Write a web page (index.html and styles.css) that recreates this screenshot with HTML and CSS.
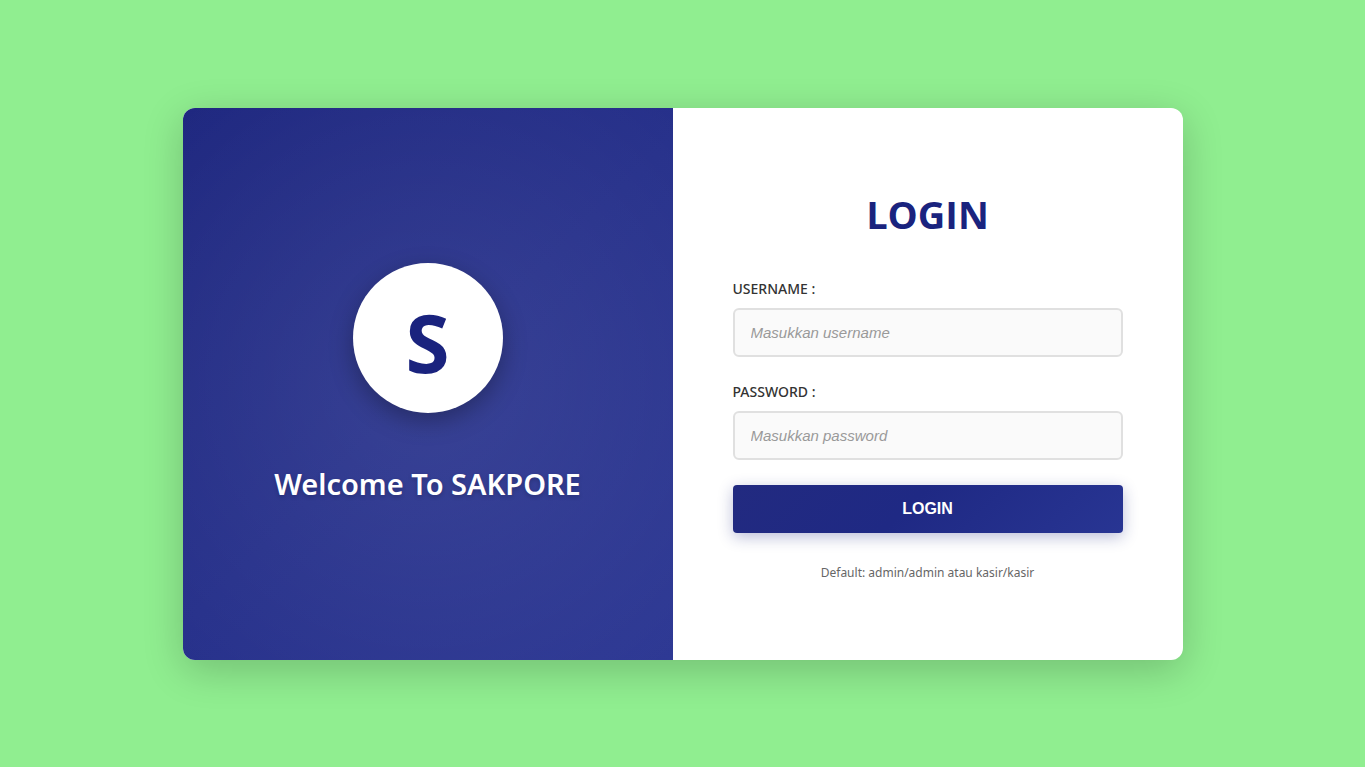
FILE: index.html
```html
<!DOCTYPE html>
<html lang="id">
<head>
<meta charset="utf-8">
<meta name="viewport" content="width=device-width, initial-scale=1">
<title>Login - SAKPORE</title>
<link rel="stylesheet" href="styles.css">
</head>
<body>
<main class="login-card">
  <section class="welcome">
    <div class="logo">S</div>
    <p class="welcome-text">Welcome To SAKPORE</p>
  </section>
  <section class="panel">
    <h1 class="title">LOGIN</h1>
    <form class="form">
      <div class="field">
        <label class="label" for="username">USERNAME :</label>
        <input class="input" id="username" name="username" type="text" placeholder="Masukkan username">
      </div>
      <div class="field">
        <label class="label" for="password">PASSWORD :</label>
        <input class="input" id="password" name="password" type="password" placeholder="Masukkan password">
      </div>
      <button class="submit" type="submit">LOGIN</button>
    </form>
    <p class="hint">Default: admin/admin atau kasir/kasir</p>
  </section>
</main>
</body>
</html>
```
FILE: styles.css
```css
* {
  box-sizing: border-box;
  margin: 0;
  padding: 0;
}

body {
  min-height: 100vh;
  display: flex;
  align-items: center;
  justify-content: center;
  padding: 20px;
  background: #90ee90;
  font-family: "Segoe UI", "Noto Sans", "Open Sans", sans-serif;
}

.login-card {
  display: flex;
  width: 100%;
  max-width: 1000px;
  border-radius: 12px;
  overflow: hidden;
  background: #fff;
  box-shadow: 0 10px 40px rgba(0, 0, 0, 0.2);
}

.welcome {
  flex: 0 0 49%;
  display: flex;
  flex-direction: column;
  align-items: center;
  justify-content: center;
  gap: 50px;
  padding: 60px 40px;
  color: #fff;
  background:
    radial-gradient(circle at center, rgba(255, 255, 255, 0.08) 0%, transparent 100%),
    linear-gradient(135deg, #1f2880 0%, #27318b 50%, #2e3994 100%);
}

.logo {
  display: flex;
  align-items: center;
  justify-content: center;
  width: 150px;
  height: 150px;
  padding-top: 8px;
  border-radius: 50%;
  background: #fff;
  color: #1a237e;
  font-size: 80px;
  font-weight: 700;
  box-shadow: 0 8px 25px rgba(0, 0, 0, 0.3);
}

.welcome-text {
  font-size: 29px;
  line-height: 42px;
  font-weight: 600;
  text-shadow: 0 2px 4px rgba(0, 0, 0, 0.2);
}

.panel {
  flex: 1;
  padding: 80px 60px 78px;
}

.title {
  margin-bottom: 39px;
  color: #1a237e;
  font-family: "Segoe UI", "Open Sans", sans-serif;
  font-size: 38px;
  line-height: 52px;
  font-weight: 700;
  text-align: center;
}

.field {
  margin-bottom: 25px;
}

.label {
  display: block;
  margin-bottom: 10px;
  color: #333;
  font-size: 14px;
  line-height: 19px;
  font-weight: 500;
}

.input {
  display: block;
  width: 100%;
  height: 49px;
  padding: 0 16px;
  border: 2px solid #e0e0e0;
  border-radius: 6px;
  background: #fafafa;
  color: #333;
  font-family: "Liberation Sans", Arial, sans-serif;
  font-size: 15px;
}

.input::placeholder {
  color: #999;
  font-style: italic;
}

.submit {
  display: block;
  width: 100%;
  height: 48px;
  border: 0;
  border-radius: 4px;
  background: linear-gradient(135deg, #222a80 0%, #1f2984 45%, #283593 100%);
  color: #fff;
  font-family: "Liberation Sans", Arial, sans-serif;
  font-size: 16px;
  font-weight: 700;
  box-shadow: 0 4px 15px rgba(26, 35, 126, 0.3);
}

.hint {
  margin-top: 31px;
  color: #666;
  font-size: 12px;
  line-height: 18px;
  text-align: center;
}
```
